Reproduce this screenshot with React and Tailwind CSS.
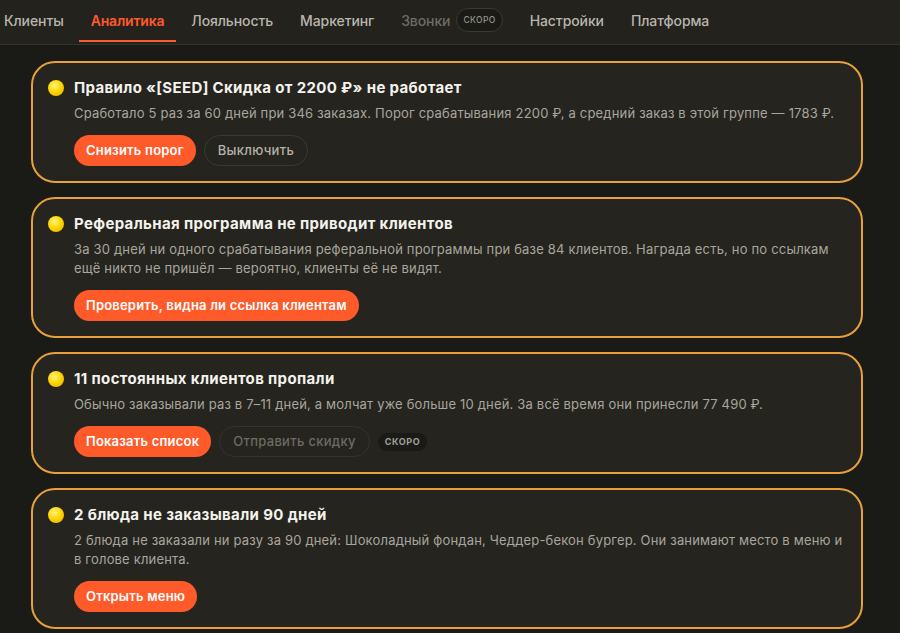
import React from "react";

const tabs = [
  { label: "Клиенты" },
  { label: "Аналитика", active: true },
  { label: "Лояльность" },
  { label: "Маркетинг" },
  { label: "Звонки", soon: true },
  { label: "Настройки" },
  { label: "Платформа" },
];

function Dot() {
  return (
    <div className="mt-[3px] h-4 w-4 shrink-0 rounded-full bg-[radial-gradient(circle_at_40%_35%,#fff486_0%,#ffd600_45%,#e6ab00_100%)]" />
  );
}

function Primary({ children }) {
  return (
    <button className="h-[31px] rounded-full bg-[#ff5a2a] px-3 text-[13px] font-semibold tracking-[0.2px] text-white">
      {children}
    </button>
  );
}

function Card({ title, desc, children }) {
  return (
    <div className="rounded-[24px] border-2 border-[#e9a03b] bg-[#25241f] pb-[15px] pl-[15px] pr-4 pt-[14px]">
      <div className="flex gap-[10px]">
        <Dot />
        <div className="min-w-0 flex-1">
          <div className="text-[15px] font-bold leading-[22px] tracking-[0.35px] text-[#f4f2ec]">{title}</div>
          <div className="mt-[5px] text-[13px] leading-[19px] tracking-[0.18px] text-[#a9a69c]">{desc}</div>
          <div className="mt-[12px] flex items-center gap-2">{children}</div>
        </div>
      </div>
    </div>
  );
}

export default function App() {
  return (
    <div
      className="min-h-[633px] w-[900px] overflow-hidden bg-[#1a1a16]"
      style={{ fontFamily: "Inter, 'Noto Sans', sans-serif" }}
    >
      <div className="flex h-[45px] items-start border-b border-[#34332d] bg-[#23221d]">
        <div className="-ml-2 flex gap-[3px]">
          {tabs.map((t) => (
            <div
              key={t.label}
              className={
                "flex h-[42px] items-center gap-[6px] border-b-2 px-3 text-[14px] " +
                (t.active
                  ? "border-[#ff5a2a] font-semibold tracking-[-0.2px] text-[#ff5a2a]"
                  : "border-transparent font-medium tracking-[-0.1px] " + (t.soon ? "text-[#6f6d64]" : "text-[#b9b6ac]"))
              }
            >
              <span>{t.label}</span>
              {t.soon && (
                <span className="flex h-6 items-center rounded-full border border-[#3b3a33] bg-[#1a1a16] px-[6px] text-[8.5px] font-medium tracking-[0.4px] text-[#95928a]">
                  СКОРО
                </span>
              )}
            </div>
          ))}
        </div>
      </div>

      <div className="ml-[31px] mt-4 flex w-[832px] flex-col gap-[14px] pb-4">
        <Card
          title="Правило «[SEED] Скидка от 2200 ₽» не работает"
          desc="Сработало 5 раз за 60 дней при 346 заказах. Порог срабатывания 2200 ₽, а средний заказ в этой группе — 1783 ₽."
        >
          <Primary>Снизить порог</Primary>
          <button className="h-[31px] rounded-full border border-[#3a3933] px-[13px] text-[13px] font-medium tracking-[0.3px] text-[#b5b2a8]">
            Выключить
          </button>
        </Card>
        <Card
          title="Реферальная программа не приводит клиентов"
          desc="За 30 дней ни одного срабатывания реферальной программы при базе 84 клиентов. Награда есть, но по ссылкам ещё никто не пришёл — вероятно, клиенты её не видят."
        >
          <Primary>Проверить, видна ли ссылка клиентам</Primary>
        </Card>
        <Card
          title="11 постоянных клиентов пропали"
          desc="Обычно заказывали раз в 7–11 дней, а молчат уже больше 10 дней. За всё время они принесли 77 490 ₽."
        >
          <Primary>Показать список</Primary>
          <button className="h-[31px] rounded-full border border-[#34332d] px-[13px] text-[13px] font-medium tracking-[0.3px] text-[#6d6b62]">
            Отправить скидку
          </button>
          <span className="flex h-[18px] items-center rounded-full bg-[#1a1a16] px-[7px] text-[9px] font-bold tracking-[0.6px] text-[#a3a095]">
            СКОРО
          </span>
        </Card>
        <Card
          title="2 блюда не заказывали 90 дней"
          desc="2 блюда не заказали ни разу за 90 дней: Шоколадный фондан, Чеддер-бекон бургер. Они занимают место в меню и в голове клиента."
        >
          <Primary>Открыть меню</Primary>
        </Card>
      </div>
    </div>
  );
}
